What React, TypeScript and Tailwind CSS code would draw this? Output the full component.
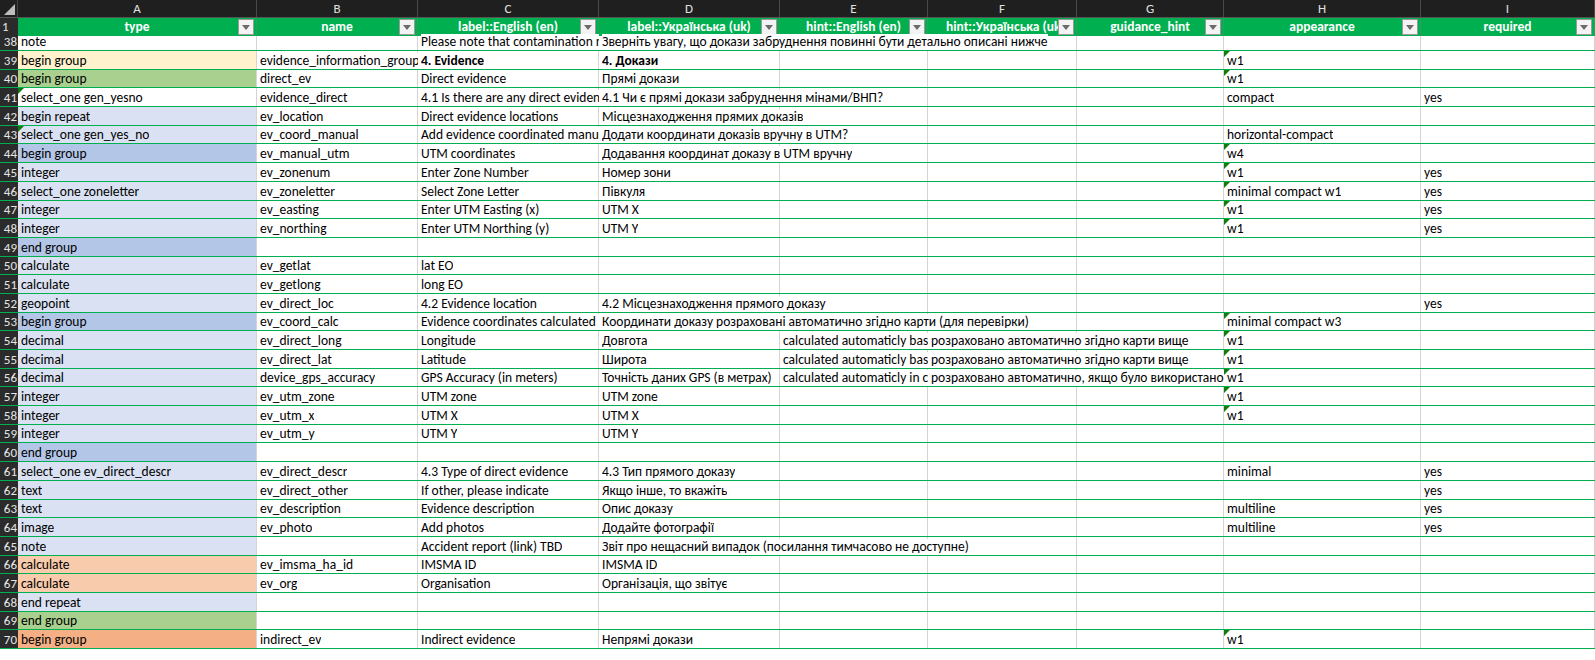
import React from 'react';

const widths = [239, 161, 181, 181, 148, 149, 147, 197, 174];
const letters = ['A', 'B', 'C', 'D', 'E', 'F', 'G', 'H', 'I'];
const heads = ['type', 'name', 'label::English (en)', 'label::Українська (uk)', 'hint::English (en)', 'hint::Українська (uk)', 'guidance_hint', 'appearance', 'required'];

const W = '', Y = 'bg-[#fff2cc]', G = 'bg-[#a9d08e]', L = 'bg-[#d9e1f2]', B = 'bg-[#b4c6e7]', P = 'bg-[#f8cbad]', O = 'bg-[#f4b084]';

type Row = { n: number; bg: string; c: string[]; bold?: boolean; marks?: number[] };

const rows: Row[] = [
  { n: 38, bg: W, c: ['note', '', 'Please note that contamination must be described', 'Зверніть увагу, що докази забруднення повинні бути детально описані нижче'] },
  { n: 39, bg: Y, c: ['begin group', 'evidence_information_group', '4. Evidence', '4. Докази', '', '', '', 'w1'], bold: true, marks: [7] },
  { n: 40, bg: G, c: ['begin group', 'direct_ev', 'Direct evidence', 'Прямі докази', '', '', '', 'w1'], marks: [7] },
  { n: 41, bg: W, c: ['select_one gen_yesno', 'evidence_direct', '4.1 Is there are any direct evidence?', '4.1 Чи є прямі докази забруднення мінами/ВНП?', '', '', '', 'compact', 'yes'], marks: [0] },
  { n: 42, bg: L, c: ['begin repeat', 'ev_location', 'Direct evidence locations', 'Місцезнаходження прямих доказів'] },
  { n: 43, bg: L, c: ['select_one gen_yes_no', 'ev_coord_manual', 'Add evidence coordinated manually in UTM?', 'Додати координати доказів вручну в UTM?', '', '', '', 'horizontal-compact'], marks: [0] },
  { n: 44, bg: B, c: ['begin group', 'ev_manual_utm', 'UTM coordinates', 'Додавання координат доказу в UTM вручну', '', '', '', 'w4'], marks: [7] },
  { n: 45, bg: L, c: ['integer', 'ev_zonenum', 'Enter Zone Number', 'Номер зони', '', '', '', 'w1', 'yes'], marks: [7] },
  { n: 46, bg: L, c: ['select_one zoneletter', 'ev_zoneletter', 'Select Zone Letter', 'Півкуля', '', '', '', 'minimal compact w1', 'yes'], marks: [7] },
  { n: 47, bg: L, c: ['integer', 'ev_easting', 'Enter UTM Easting (x)', 'UTM X', '', '', '', 'w1', 'yes'], marks: [7] },
  { n: 48, bg: L, c: ['integer', 'ev_northing', 'Enter UTM Northing (y)', 'UTM Y', '', '', '', 'w1', 'yes'], marks: [7] },
  { n: 49, bg: B, c: ['end group'] },
  { n: 50, bg: L, c: ['calculate', 'ev_getlat', 'lat EO'] },
  { n: 51, bg: L, c: ['calculate', 'ev_getlong', 'long EO'] },
  { n: 52, bg: L, c: ['geopoint', 'ev_direct_loc', '4.2 Evidence location', '4.2 Місцезнаходження прямого доказу', '', '', '', '', 'yes'] },
  { n: 53, bg: B, c: ['begin group', 'ev_coord_calc', 'Evidence coordinates calculated automatically', 'Координати доказу розраховані автоматично згідно карти (для перевірки)', '', '', '', 'minimal compact w3'], marks: [7] },
  { n: 54, bg: L, c: ['decimal', 'ev_direct_long', 'Longitude', 'Довгота', 'calculated automaticly based on map', 'розраховано автоматично згідно карти вище', '', 'w1'], marks: [7] },
  { n: 55, bg: L, c: ['decimal', 'ev_direct_lat', 'Latitude', 'Широта', 'calculated automaticly based on map', 'розраховано автоматично згідно карти вище', '', 'w1'], marks: [7] },
  { n: 56, bg: L, c: ['decimal', 'device_gps_accuracy', 'GPS Accuracy (in meters)', 'Точність даних GPS (в метрах)', 'calculated automaticly in case', 'розраховано автоматично, якщо було використано GPS', '', 'w1'], marks: [7] },
  { n: 57, bg: L, c: ['integer', 'ev_utm_zone', 'UTM zone', 'UTM zone', '', '', '', 'w1'], marks: [7] },
  { n: 58, bg: L, c: ['integer', 'ev_utm_x', 'UTM X', 'UTM X', '', '', '', 'w1'], marks: [7] },
  { n: 59, bg: L, c: ['integer', 'ev_utm_y', 'UTM Y', 'UTM Y'] },
  { n: 60, bg: B, c: ['end group'] },
  { n: 61, bg: L, c: ['select_one ev_direct_descr', 'ev_direct_descr', '4.3 Type of direct evidence', '4.3 Тип прямого доказу', '', '', '', 'minimal', 'yes'] },
  { n: 62, bg: L, c: ['text', 'ev_direct_other', 'If other, please indicate', 'Якщо інше, то вкажіть', '', '', '', '', 'yes'] },
  { n: 63, bg: L, c: ['text', 'ev_description', 'Evidence description', 'Опис доказу', '', '', '', 'multiline', 'yes'] },
  { n: 64, bg: L, c: ['image', 'ev_photo', 'Add photos', 'Додайте фотографії', '', '', '', 'multiline', 'yes'] },
  { n: 65, bg: L, c: ['note', '', 'Accident report (link) TBD', 'Звіт про нещасний випадок (посилання тимчасово не доступне)'] },
  { n: 66, bg: P, c: ['calculate', 'ev_imsma_ha_id', 'IMSMA ID', 'IMSMA ID'] },
  { n: 67, bg: P, c: ['calculate', 'ev_org', 'Organisation', 'Організація, що звітує'] },
  { n: 68, bg: L, c: ['end repeat'] },
  { n: 69, bg: G, c: ['end group'] },
  { n: 70, bg: O, c: ['begin group', 'indirect_ev', 'Indirect evidence', 'Непрямі докази', '', '', '', 'w1'], marks: [7] },
];

const font = { fontFamily: 'Calibri, Carlito, "Liberation Sans", "Noto Sans", sans-serif' };

function Filter() {
  return (
    <span className="absolute right-[2px] top-[1px] w-[16px] h-[16px] bg-[#f3f3f3] border border-[#9a9a9a] flex items-center justify-center">
      <svg width="8" height="5" viewBox="0 0 8 5"><path d="M0 0h8L4 5z" fill="#6b6b6b" /></svg>
    </span>
  );
}

function DataRow({ r, first }: { r: Row; first?: boolean }) {
  // width a text may spill over: through following empty cells
  const spans = widths.map((_, i) => {
    let w = widths[i];
    for (let j = i + 1; j < widths.length && !r.c[j]; j++) w += widths[j];
    return w;
  });
  return (
    <div className={`flex border-b border-[#00b050] ${first ? 'h-[15px]' : 'h-[18.7px]'}`}>
      <div className="w-[18px] shrink-0 h-full bg-[#2b2b2b] text-[#e6e6e6] text-[13px] flex items-end justify-end pr-[1px] leading-[16px] overflow-hidden">{r.n}</div>
      {widths.map((w, i) => {
        const t = r.c[i] || '';
        const bg = i === 0 ? r.bg : 'bg-white';
        return (
          <div key={i} style={{ width: w }} className={`relative shrink-0 h-full border-r border-[#d4d4d4] ${bg}`}>
            {r.marks?.includes(i) && (
              <svg className="absolute left-0 top-0 z-20" width="6" height="6" viewBox="0 0 6 6"><path d="M0 0h6L0 6z" fill="#107c10" /></svg>
            )}
            {t && (
              <div
                style={{ maxWidth: spans[i] - 3 }}
                className={`absolute left-[3px] bottom-0 z-10 whitespace-nowrap overflow-hidden text-[13.5px] leading-[16px] text-black ${i === 0 ? '' : 'bg-white'} ${r.bold && (i === 2 || i === 3) ? 'font-bold' : ''}`}
              >
                {t}
              </div>
            )}
          </div>
        );
      })}
    </div>
  );
}

export default function App() {
  return (
    <div className="w-[1595px] h-[660px] overflow-hidden bg-white" style={font}>
      <div className="flex h-[17px] bg-[#1f1f1f] text-[#e0e0e0] text-[13px] leading-[17px]">
        <div className="w-[18px] shrink-0 relative border-r border-[#444]">
          <svg className="absolute right-[2px] bottom-[2px]" width="11" height="11" viewBox="0 0 11 11"><path d="M11 0v11H0z" fill="#bdbdbd" /></svg>
        </div>
        {widths.map((w, i) => (
          <div key={i} style={{ width: w }} className="shrink-0 text-center border-r border-[#4a4a4a]">{letters[i]}</div>
        ))}
      </div>
      <div className="flex h-[19px] border-t border-[#555]">
        <div className="w-[18px] shrink-0 bg-[#2b2b2b] text-[#e6e6e6] text-[13px] leading-[18px] pl-[2px]">1</div>
        {widths.map((w, i) => (
          <div key={i} style={{ width: w }} className="relative shrink-0 bg-[#00b050] border-r border-[#2f9e5b] text-white font-bold text-[13.5px] leading-[18px] text-center overflow-hidden whitespace-nowrap pr-[18px]">
            <span className="pl-[18px]">{heads[i]}</span>
            <Filter />
          </div>
        ))}
      </div>
      {rows.map((r, k) => (
        <DataRow key={r.n} r={r} first={k === 0} />
      ))}
    </div>
  );
}
